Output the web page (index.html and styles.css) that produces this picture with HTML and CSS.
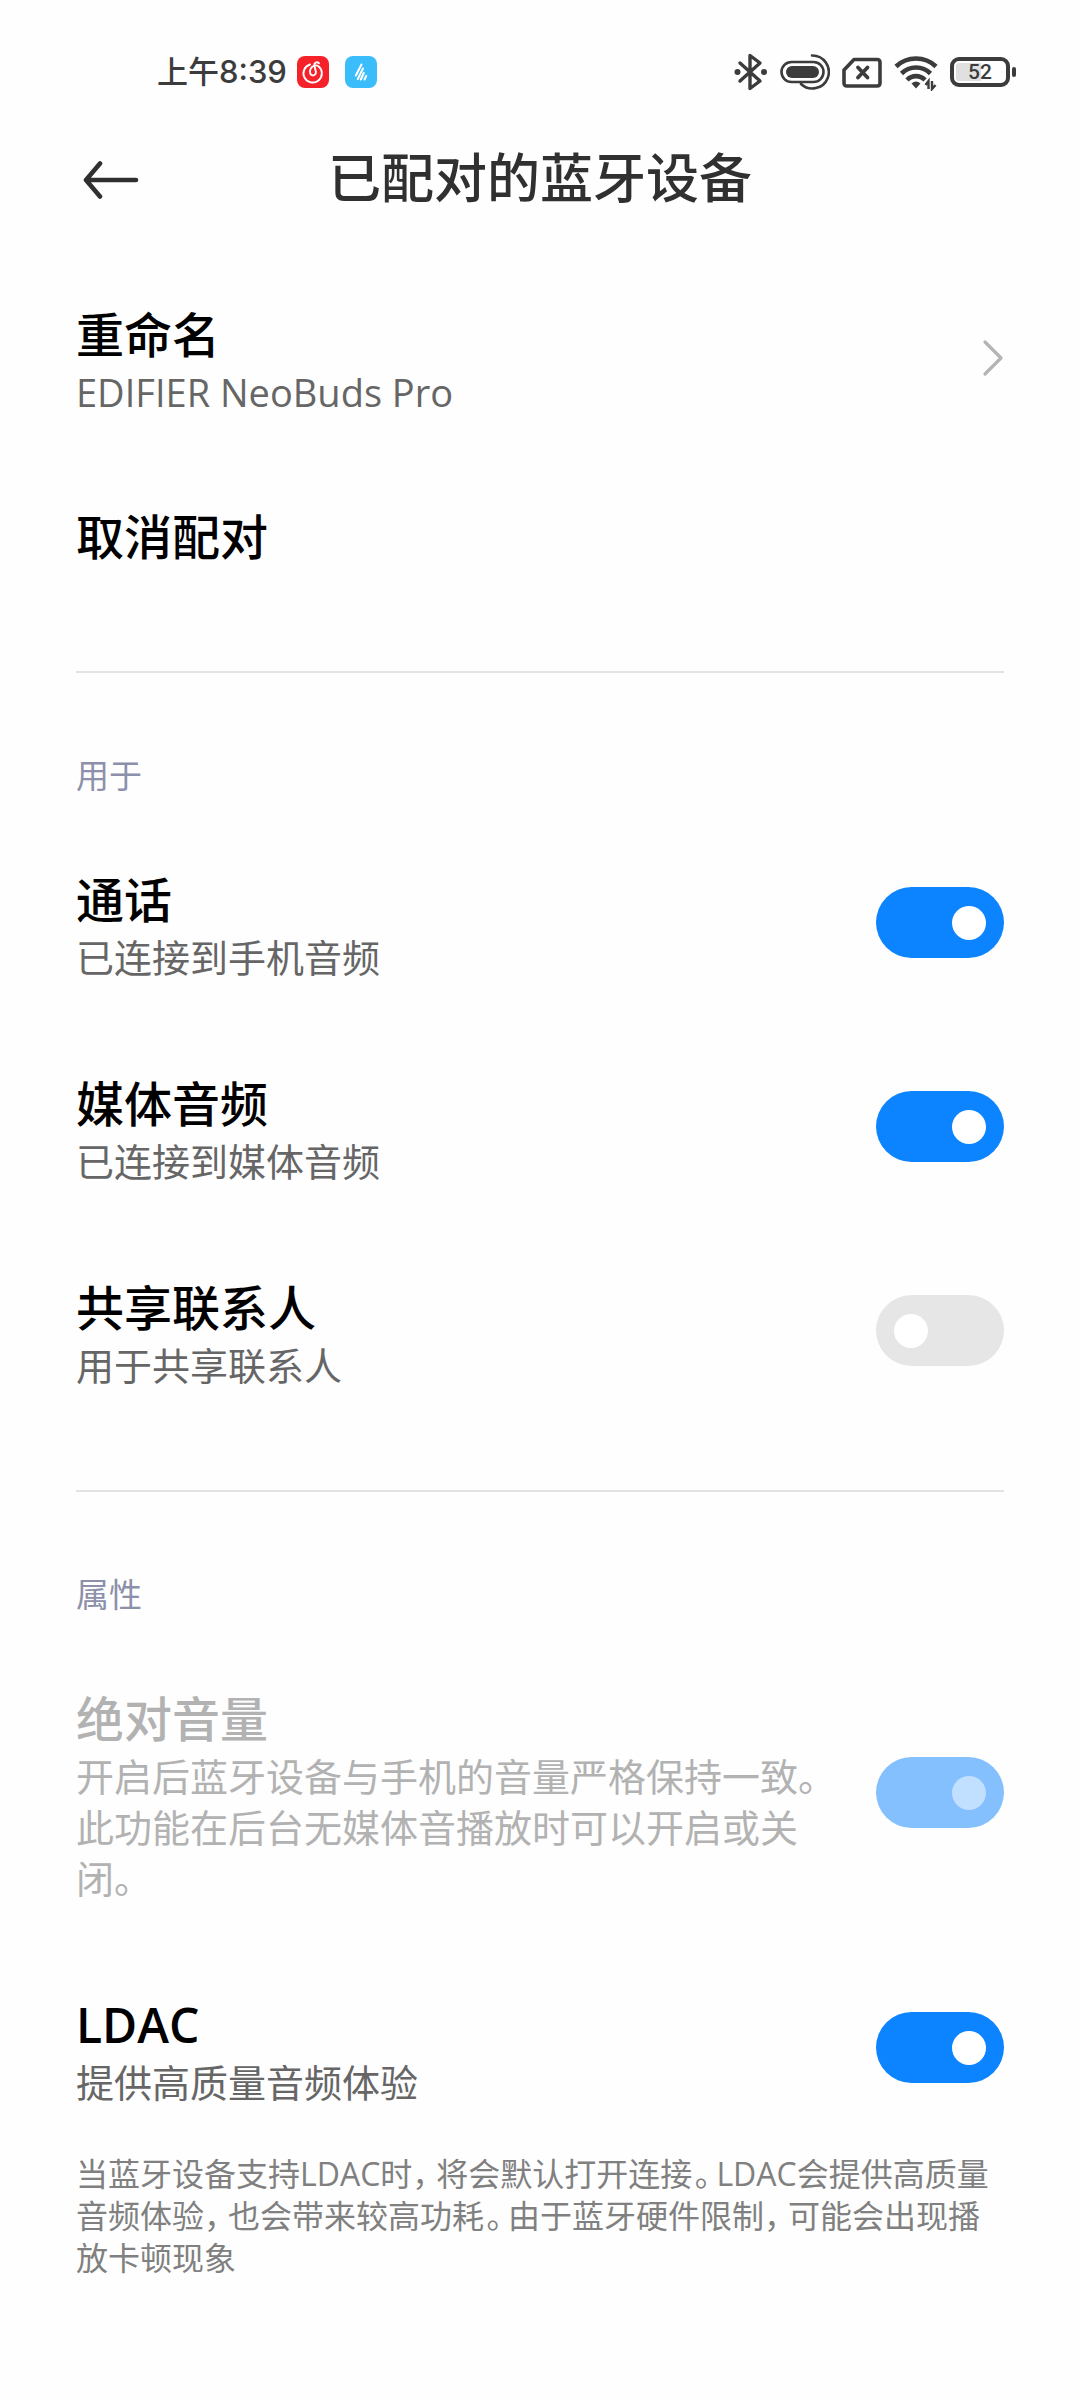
FILE: index.html
```html
<!DOCTYPE html>
<html lang="zh-CN">
<head>
    <meta charset="UTF-8">
    <meta name="viewport" content="width=device-width, initial-scale=1.0">
    <title>已配对的蓝牙设备</title>
    <link rel="stylesheet" href="styles.css">
</head>
<body>
    <div class="status-bar">
        <div class="status-left">
            <span class="time">上午8:39</span>
            <svg class="app-icon" width="32" height="32" viewBox="0 0 32 32">
                <rect width="32" height="32" rx="8" fill="#f5222a"/>
                <g fill="none" stroke="#fff" stroke-width="1.900" stroke-linecap="round">
                    <path d="M13 8.500A9.200 9.200 0 1 0 21.500 10.200C19.500 9 17 9.300 15 11C12.500 13.200 12.300 17 14.200 18.700C16.300 20.300 19.200 18.800 18.900 16L17.300 9C17 6.500 20 5.500 22 7.200"/>
                </g>
            </svg>
            <svg class="app-icon" width="32" height="32" viewBox="0 0 32 32">
                <rect width="32" height="32" rx="8" fill="#3bbcfb"/>
                <g stroke="#fff" stroke-width="2" stroke-linecap="round">
                    <path d="M16.500 8.500L10.800 19.500M18 12.500L12.800 23M18.800 17L15.800 23.500M21.200 20L19.500 23.500"/>
                </g>
            </svg>
        </div>
        <div class="status-right">
            <!-- 蓝牙 -->
            <svg width="34" height="38" viewBox="0 0 34 38">
                <path d="M6 10L26 28L16 35.500V2.500L26 10L6 28" fill="none" stroke="#3c3c3c" stroke-width="3.400" stroke-linejoin="round" stroke-linecap="round"/>
                <circle cx="3.500" cy="19" r="3" fill="#3c3c3c"/>
                <circle cx="30" cy="19" r="3" fill="#3c3c3c"/>
            </svg>
            <!-- 耳机连接 -->
            <svg width="50" height="38" viewBox="0 0 50 38">
                <g fill="none" stroke="#3c3c3c" stroke-width="2.600" stroke-linecap="round">
                    <rect x="1.500" y="9" width="42" height="20" rx="10"/>
                    <path d="M32 2.500A16.500 16.500 0 1 1 21 31"/>
                </g>
                <rect x="6" y="13" width="33" height="12" rx="6" fill="#3c3c3c"/>
            </svg>
            <!-- 无 SIM 卡 -->
            <svg width="40" height="38" viewBox="0 0 40 38">
                <path d="M12 6.500H35Q38 6.500 38 9.500V30Q38 33 35 33H5Q2 33 2 30V17Z" fill="none" stroke="#3c3c3c" stroke-width="3.600" stroke-linejoin="round"/>
                <path d="M16 14.500L25.500 24.500M25.500 14.500L16 24.500" stroke="#3c3c3c" stroke-width="3.800" stroke-linecap="round"/>
            </svg>
            <!-- WLAN -->
            <svg width="44" height="38" viewBox="0 0 44 38">
                <g fill="none" stroke="#3c3c3c" stroke-width="4.600">
                    <path d="M2 13.500A29 29 0 0 1 42 13.500"/>
                    <path d="M7.500 20.500A20.500 20.500 0 0 1 36.500 20.500"/>
                    <path d="M13 27A12.500 12.500 0 0 1 31 27"/>
                </g>
                <path d="M17.500 30.500Q22 26.500 26.500 30.500L22 35.500Z" fill="#3c3c3c"/>
                <path d="M34.500 36V28L31.500 32M38 28V36L41.500 32" fill="none" stroke="#3c3c3c" stroke-width="2.400"/>
            </svg>
            <!-- 电池 -->
            <div class="battery"><span class="battery-text">52</span></div>
        </div>
    </div>

    <header class="header">
        <button class="back-btn" type="button" aria-label="返回">
            <svg width="56" height="40" viewBox="0 0 56 40">
                <path d="M53 20H3M17 3.500L3 20L17 36.500" fill="none" stroke="#303030" stroke-width="4.600" stroke-linecap="round" stroke-linejoin="round"/>
            </svg>
        </button>
        <h1>已配对的蓝牙设备</h1>
    </header>

    <main class="container">
        <section class="section">
            <button class="row" type="button">
                <span class="row-text">
                    <span class="row-title">重命名</span>
                    <span class="row-summary">EDIFIER NeoBuds Pro</span>
                </span>
                <svg class="arrow" width="22" height="38" viewBox="0 0 22 38">
                    <path d="M3 3L19 19L3 35" fill="none" stroke="#b4b4b4" stroke-width="3.200" stroke-linecap="round" stroke-linejoin="round"/>
                </svg>
            </button>
            <button class="row row-single" type="button">
                <span class="row-title">取消配对</span>
            </button>
        </section>

        <section class="section">
            <h2>用于</h2>
            <label class="row">
                <span class="row-text">
                    <span class="row-title">通话</span>
                    <span class="row-summary">已连接到手机音频</span>
                </span>
                <input class="switch" type="checkbox" checked>
            </label>
            <label class="row">
                <span class="row-text">
                    <span class="row-title">媒体音频</span>
                    <span class="row-summary">已连接到媒体音频</span>
                </span>
                <input class="switch" type="checkbox" checked>
            </label>
            <label class="row">
                <span class="row-text">
                    <span class="row-title">共享联系人</span>
                    <span class="row-summary">用于共享联系人</span>
                </span>
                <input class="switch" type="checkbox">
            </label>
        </section>

        <section class="section">
            <h2>属性</h2>
            <label class="row row-disabled">
                <span class="row-text">
                    <span class="row-title">绝对音量</span>
                    <span class="row-summary">开启后蓝牙设备与手机的音量严格保持一致。此功能在后台无媒体音播放时可以开启或关闭。</span>
                </span>
                <input class="switch" type="checkbox" checked disabled>
            </label>
            <label class="row">
                <span class="row-text">
                    <span class="row-title latin">LDAC</span>
                    <span class="row-summary">提供高质量音频体验</span>
                </span>
                <input class="switch" type="checkbox" checked>
            </label>
            <p class="note">当蓝牙设备支持LDAC时<span class="mark">，</span>将会默认打开连接<span class="mark">。</span>LDAC会提供高质量<br>音频体验<span class="mark">，</span>也会带来较高功耗<span class="mark">。</span>由于蓝牙硬件限制<span class="mark">，</span>可能会出现播<br>放卡顿现象</p>
        </section>
    </main>
</body>
</html>
```

FILE: styles.css
```css
* {
    box-sizing: border-box;
}

body {
    margin: 0;
    background: #fefefe;
    color: #000;
    font-family: "Open Sans", "Noto Sans CJK SC", sans-serif;
}

/* 状态栏 */
.status-bar {
    display: flex;
    align-items: center;
    justify-content: space-between;
    height: 112px;
    padding: 32px 64px 0 157px;
    color: #3c3c3c;
}

.status-left,
.status-right {
    display: flex;
    align-items: center;
}

.status-left {
    gap: 16px;
}

.status-right {
    gap: 12px;
}

.time {
    margin-right: -6px;
    font-family: Inter, "Noto Sans CJK SC", sans-serif;
    font-size: 31px;
    font-weight: 500;
    line-height: 40px;
}

.battery {
    position: relative;
    width: 60px;
    height: 30px;
    margin-right: 6px;
    border: 4px solid #3c3c3c;
    border-radius: 9px;
    background: linear-gradient(90deg, #e0e0e0 52%, transparent 52%);
    background-clip: content-box;
    padding: 2px;
    text-align: center;
}

.battery::after {
    content: "";
    position: absolute;
    top: 6px;
    right: -10px;
    width: 4px;
    height: 10px;
    border-radius: 2px;
    background: #3c3c3c;
}

.battery-text {
    display: block;
    font-family: Roboto, sans-serif;
    font-size: 21px;
    font-weight: 500;
    line-height: 18px;
}

/* 标题栏 */
.header {
    display: grid;
    grid-template-columns: 64px 1fr 64px;
    align-items: center;
    height: 144px;
    padding: 0 76px 12px;
}

.back-btn {
    display: flex;
    justify-content: center;
    padding: 4px 0 0 6px;
    border: none;
    background: none;
    cursor: pointer;
}

h1 {
    margin: 0;
    color: #303030;
    font-size: 53px;
    font-weight: 500;
    line-height: 72px;
    text-align: center;
}

.container {
    padding: 0 76px;
}

.section + .section {
    margin-top: 57px;
    padding-top: 77px;
    border-top: 2px solid #e3e3e3;
}

h2 {
    margin: 0;
    padding-bottom: 19px;
    color: #8c90aa;
    font-size: 33px;
    font-weight: 400;
    line-height: 52px;
}

.row {
    display: flex;
    align-items: center;
    justify-content: space-between;
    gap: 32px;
    width: 100%;
    padding: 41px 0 42px;
    border: none;
    background: none;
    color: #000;
    font-family: inherit;
    text-align: left;
    cursor: pointer;
}

.row-single {
    padding: 45px 0;
}

.row-text {
    flex: 1;
    padding-top: 6px;
}

.row-title,
.row-summary {
    display: block;
}

.row-title {
    font-size: 48px;
    font-weight: 500;
    line-height: 64px;
}

.latin {
    font-weight: 600;
}

.row-summary {
    color: #666;
    font-size: 38px;
    line-height: 51px;
}

.row-disabled,
.row-disabled .row-summary {
    color: #b2b2b2;
    cursor: default;
}

/* 开关 */
.switch {
    appearance: none;
    flex: none;
    display: flex;
    align-items: center;
    width: 128px;
    height: 71px;
    margin: 0;
    padding: 0 18px;
    border-radius: 36px;
    background: #e6e6e6;
    cursor: pointer;
}

.switch::before {
    content: "";
    width: 34px;
    height: 34px;
    border-radius: 50%;
    background: #fff;
}

.switch:checked {
    justify-content: flex-end;
    background: #0d84ff;
}

.switch:disabled {
    opacity: 0.5;
    cursor: default;
}

.switch:disabled::before {
    opacity: 0.5;
}

.note {
    margin: 0;
    padding: 3px 0 96px;
    color: #808080;
    font-size: 32px;
    line-height: 42px;
    font-feature-settings: "palt";
}

/* 标点两侧留白 */
.mark {
    margin: 0 6px 0 2px;
}
```
